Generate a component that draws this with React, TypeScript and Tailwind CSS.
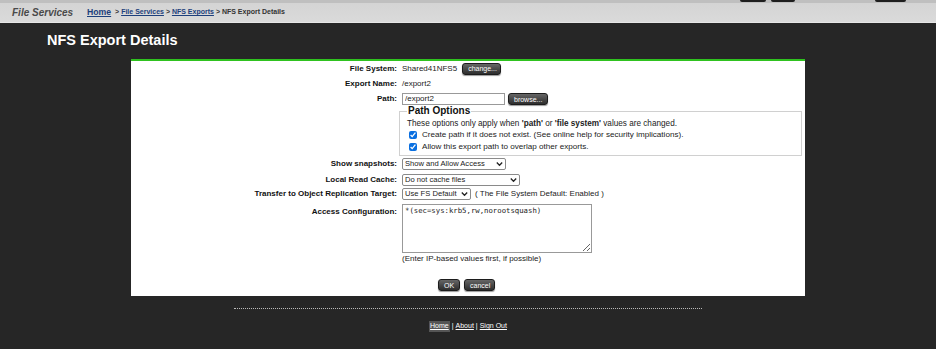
import React from "react";

/* -------------------------------------------------------------------------- */
/* Small helpers                                                               */
/* -------------------------------------------------------------------------- */

function DarkButton({ label, className = "" }: { label: string; className?: string }) {
  return (
    <button
      className={`h-[12px] px-[5px] rounded-[3px] border border-[#1c1c1c] bg-gradient-to-b from-[#666] to-[#2e2e2e] text-white text-[7px] leading-none shadow-[0_1px_1px_rgba(0,0,0,0.4)] ${className}`}
    >
      {label}
    </button>
  );
}

function Chevron() {
  return (
    <svg
      width="7"
      height="5"
      viewBox="0 0 7 5"
      className="pointer-events-none absolute right-[3px] top-1/2 -translate-y-1/2"
    >
      <path d="M0.8 1 L3.5 3.8 L6.2 1" fill="none" stroke="#222" strokeWidth="1.3" />
    </svg>
  );
}

function FakeSelect({ value, width }: { value: string; width: string }) {
  return (
    <div className={`relative h-[12px] ${width}`}>
      <select
        defaultValue={value}
        className="appearance-none w-full h-full border border-[#8a8a8a] rounded-[2px] bg-white pl-[2px] text-[7.6px] leading-none text-[#222] outline-none"
      >
        <option>{value}</option>
      </select>
      <Chevron />
    </div>
  );
}

function Row({
  label,
  children,
  className = "",
}: {
  label: string;
  children: React.ReactNode;
  className?: string;
}) {
  return (
    <div className={`flex items-center ${className}`}>
      <div className="w-[268px] shrink-0 pr-[2px] text-right font-bold text-[8px] text-[#111]">
        {label}
      </div>
      <div className="ml-[3px] flex items-center gap-[4px] text-[8px] text-[#222]">
        {children}
      </div>
    </div>
  );
}

/* -------------------------------------------------------------------------- */
/* Page                                                                        */
/* -------------------------------------------------------------------------- */

export default function App() {
  return (
    <div className="min-h-screen bg-[#262626] font-['Liberation_Sans',Arial,sans-serif]">
      {/* ============================ TOP STRIP ============================ */}
      <div className="h-[3px] bg-[#bfbfbf] flex">
        <div className="w-[740px]" />
        <div className="w-[26px] h-[2px] rounded-b-[2px] bg-[#1e1e1e]" />
        <div className="w-[5px]" />
        <div className="w-[24px] h-[2px] rounded-b-[2px] bg-[#1e1e1e]" />
        <div className="w-[80px]" />
        <div className="w-[31px] h-[2px] rounded-b-[2px] bg-[#1e1e1e]" />
      </div>

      {/* ============================ BREADCRUMB BAR ============================ */}
      <div className="h-[20px] bg-gradient-to-b from-[#d4d4d4] to-[#dadada] border-b border-[#e6e6e6] flex items-center">
        <span className="ml-[12px] w-[75px] italic font-bold text-[10px] text-[#4a4a4a]">
          File Services
        </span>
        <span className="text-[8.7px] font-bold text-[#1d3f7c] underline">Home</span>
        <span className="ml-[2px] text-[7px] font-bold text-[#333] whitespace-pre">
          {" > "}
          <span className="underline text-[#1d3f7c]">File Services</span>
          {" > "}
          <span className="underline text-[#1d3f7c]">NFS Exports</span>
          {" > NFS Export Details"}
        </span>
      </div>

      {/* ============================ TITLE ============================ */}
      <div className="h-[36px] flex items-center pl-[47px] pb-[1px]">
        <h1 className="text-[14.5px] font-bold text-white">NFS Export Details</h1>
      </div>

      {/* ============================ MAIN PANEL ============================ */}
      <div className="ml-[131px] w-[674px] h-[237px] bg-white border-t-2 border-[#2fc21f] pt-[1px] pr-[3px]">
        <Row label="File System:" className="h-[13px]">
          <span>Shared41NFS5</span>
          <DarkButton label="change..." className="ml-[1px] w-[39px]" />
        </Row>

        <Row label="Export Name:" className="h-[14px] mt-[2px]">
          <span>/export2</span>
        </Row>

        <Row label="Path:" className="h-[12px] mt-[2px]">
          <input
            defaultValue="/export2"
            className="w-[103px] h-[12px] border border-[#999] px-[2px] text-[8px] text-[#222] outline-none"
          />
          <DarkButton label="browse..." className="ml-[-1px] w-[40px]" />
        </Row>

        {/* ---------------- Path Options fieldset ---------------- */}
        <div className="ml-[268px]">
          <fieldset className="border border-[#d0d0d0] px-[7px] pb-[4px] pt-0 h-[51px]">
            <legend className="px-[1px] text-[10px] font-bold text-[#111] leading-[12px]">
              Path Options
            </legend>
            <div className="text-[8.2px] text-[#222] leading-[10px] mt-[2px]">
              These options only apply when <b>'path'</b> or <b>'file system'</b> values are
              changed.
            </div>
            <label className="flex items-center gap-[5px] text-[8.1px] text-[#222] leading-[12px] ml-[2px]">
              <input type="checkbox" defaultChecked className="w-[8px] h-[8px] m-0 accent-[#0a6fe0]" />
              Create path if it does not exist. (See online help for security implications).
            </label>
            <label className="flex items-center gap-[5px] text-[8.1px] text-[#222] leading-[12px] ml-[2px]">
              <input type="checkbox" defaultChecked className="w-[8px] h-[8px] m-0 accent-[#0a6fe0]" />
              Allow this export path to overlap other exports.
            </label>
          </fieldset>
        </div>

        <Row label="Show snapshots:" className="h-[12px] mt-[2px]">
          <FakeSelect value="Show and Allow Access" width="w-[104px]" />
        </Row>

        <Row label="Local Read Cache:" className="h-[12px] mt-[4px]">
          <FakeSelect value="Do not cache files" width="w-[118px]" />
        </Row>

        <Row label="Transfer to Object Replication Target:" className="h-[12px] mt-[2px]">
          <FakeSelect value="Use FS Default" width="w-[69px]" />
          <span>( The File System Default: Enabled )</span>
        </Row>

        <div className="flex items-start mt-[4px]">
          <div className="w-[268px] shrink-0 pr-[2px] pt-[2px] text-right font-bold text-[8px] text-[#111]">
            Access Configuration:
          </div>
          <div className="ml-[3px]">
            <textarea
              defaultValue="*(sec=sys:krb5,rw,norootsquash)"
              className="block w-[190px] h-[49px] border border-[#999] px-[2px] py-[1px] font-['DejaVu_Sans_Mono','Liberation_Mono',monospace] text-[7.3px] text-[#222] outline-none"
            />
            <div className="text-[8px] text-[#222] mt-[1px] leading-[10px]">
              (Enter IP-based values first, if possible)
            </div>
          </div>
        </div>

        <div className="flex justify-center gap-[4px] mt-[15px]">
          <DarkButton label="OK" className="w-[22px]" />
          <DarkButton label="cancel" className="w-[31px]" />
        </div>
      </div>

      {/* ============================ FOOTER ============================ */}
      <div className="mx-auto w-[468px] mt-[12px] border-t border-dotted border-[#bbb]" />
      <div className="mt-[12px] flex justify-center text-[7px] text-white">
        <span className="bg-[#555] underline px-[1px]">Home</span>
        <span className="mx-[2px]">|</span>
        <span className="underline">About</span>
        <span className="mx-[2px]">|</span>
        <span className="underline">Sign Out</span>
      </div>
    </div>
  );
}
